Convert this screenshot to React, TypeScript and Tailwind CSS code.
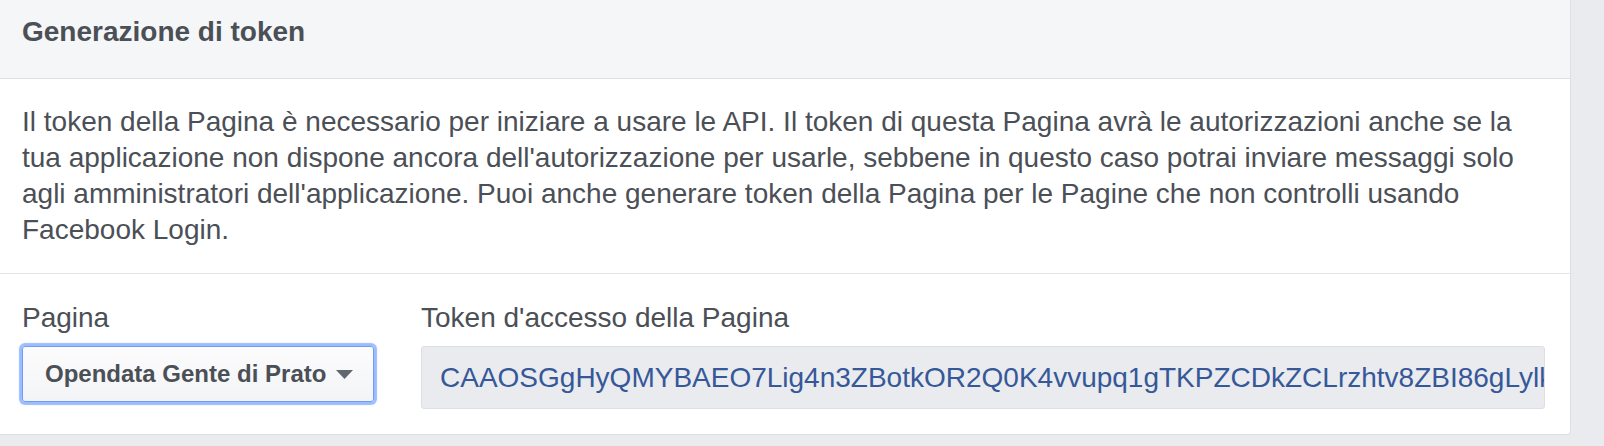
import React from 'react';

const TOKEN =
  'CAAOSGgHyQMYBAEO7Lig4n3ZBotkOR2Q0K4vvupq1gTKPZCDkZCLrzhtv8ZBI86gLylkZBqZCxR4ZAmQe1ZCbZAY7ZB0pDZD';

const Caret = () => (
  <svg width="17" height="9" viewBox="0 0 17 9" className="shrink-0">
    <path d="M0 0 H17 L8.5 9 Z" fill="#606770" />
  </svg>
);

export default function App() {
  return (
    <div className="w-[1604px] h-[446px] bg-[#e9ebee] font-['Liberation_Sans',Arial,sans-serif] text-[#4b4f56] overflow-hidden">
      {/* Card */}
      <div className="w-[1571px] bg-white border-r border-b border-[#dddfe2] rounded-br-[4px]">
        {/* Header */}
        <div className="h-[79px] bg-[#f5f6f7] border-b border-[#dddfe2] pl-[22px] pt-[15px]">
          <h2 className="text-[28px] leading-[34px] font-bold">Generazione di token</h2>
        </div>

        {/* Description */}
        <div className="px-[22px] pt-[25px] pb-[25px] border-b border-[#e5e5e5]">
          <p className="max-w-[1512px] text-[28px] leading-[36px]">
            Il token della Pagina è necessario per iniziare a usare le API. Il token di questa Pagina avrà le
            autorizzazioni anche se la tua applicazione non dispone ancora dell'autorizzazione per usarle, sebbene in
            questo caso potrai inviare messaggi solo agli amministratori dell'applicazione. Puoi anche generare token
            della Pagina per le Pagine che non controlli usando Facebook Login.
          </p>
        </div>

        {/* Form row */}
        <div className="flex pl-[22px] pr-[25px] pt-[27px] pb-[25px]">
          <div className="w-[399px] shrink-0 flex flex-col gap-[11px]">
            <label className="text-[28px] leading-[34px]">Pagina</label>
            <div>
              <button className="h-[56px] inline-flex items-center gap-[10px] pl-[22px] pr-[20px] bg-gradient-to-b from-[#fcfcfd] to-[#f3f4f6] border border-[#6f9cf5] rounded-[3px] shadow-[0_0_1px_3px_rgba(88,144,255,0.6)] text-[24px] leading-[30px] font-bold text-[#4b4f56]">
                Opendata Gente di Prato
                <Caret />
              </button>
            </div>
          </div>

          <div className="flex-1 min-w-0 flex flex-col gap-[11px]">
            <label className="text-[28px] leading-[34px]">Token d'accesso della Pagina</label>
            <div className="h-[63px] flex items-center pl-[18px] bg-[#e9ebee] border border-[#dddfe2] rounded-[3px] overflow-hidden whitespace-nowrap text-[28px] text-[#365899]">
              {TOKEN}
            </div>
          </div>
        </div>
      </div>
    </div>
  );
}
